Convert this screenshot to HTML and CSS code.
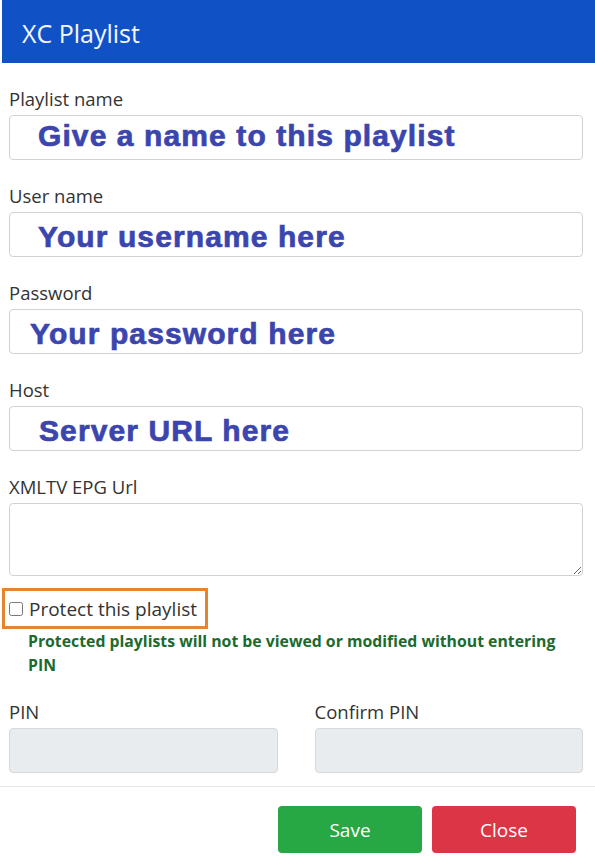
FILE: index.html
```html
<!DOCTYPE html>
<html>
<head>
<meta charset="utf-8">
<link rel="stylesheet" href="styles.css">
</head>
<body>
<div class="modal">
  <div class="modal-header">XC Playlist</div>
  <div class="modal-body">
    <div class="group">
      <label class="lbl">Playlist name</label>
      <div class="field"><span class="hint hint-a">Give a name to this playlist</span></div>
    </div>
    <div class="group">
      <label class="lbl">User name</label>
      <div class="field"><span class="hint hint-a low">Your username here</span></div>
    </div>
    <div class="group">
      <label class="lbl">Password</label>
      <div class="field"><span class="hint hint-b low">Your password here</span></div>
    </div>
    <div class="group">
      <label class="lbl">Host</label>
      <div class="field"><span class="hint hint-c low">Server URL here</span></div>
    </div>
    <div class="group last">
      <label class="lbl">XMLTV EPG Url</label>
      <textarea class="area"></textarea>
    </div>
    <label class="protect"><input type="checkbox" class="chk"><span>Protect this playlist</span></label>
    <p class="note">Protected playlists will not be viewed or modified without entering PIN</p>
    <div class="pins">
      <div class="pin-col">
        <label class="lbl">PIN</label>
        <div class="field disabled"></div>
      </div>
      <div class="pin-col">
        <label class="lbl">Confirm PIN</label>
        <div class="field disabled"></div>
      </div>
    </div>
  </div>
  <div class="modal-footer">
    <button class="btn btn-save">Save</button>
    <button class="btn btn-close">Close</button>
  </div>
</div>
</body>
</html>
```
FILE: styles.css
```css
html, body {
  margin: 0;
  padding: 0;
  background: #ffffff;
}
body {
  font-family: "Open Sans", "Noto Sans", sans-serif;
  color: #333;
}
.modal {
  width: 595px;
  height: 860px;
  padding-left: 2px;
  box-sizing: border-box;
  background: #fff;
}
.modal-header {
  height: 63px;
  background: #1052c6;
  color: #f4f7ff;
  font-size: 25px;
  line-height: 66px;
  padding-left: 20px;
}
.modal-body {
  padding: 24px 12px 0 7px;
}
.group {
  margin-bottom: 24px;
}
.group.last {
  margin-bottom: 12px;
}
.lbl {
  display: block;
  font-size: 18.5px;
  line-height: 24px;
  margin-bottom: 4px;
  color: #333;
}
.field {
  height: 45px;
  box-sizing: border-box;
  border: 1px solid #d2d2d2;
  border-radius: 4px;
  display: flex;
  align-items: center;
  background: #fff;
}
.field.disabled {
  background: #e9ecef;
  border-color: #d6d8db;
}
.hint {
  font-family: "Liberation Sans", Arial, sans-serif;
  font-weight: bold;
  font-size: 30px;
  letter-spacing: 1.1px;
  -webkit-text-stroke: 0.7px #3b45ae;
  color: #3b45ae;
  margin-top: -3px;
}
.hint.low {
  margin-top: 5px;
}
.hint-a { padding-left: 28px; }
.hint-b { padding-left: 20px; }
.hint-c { padding-left: 29px; }
.area {
  display: block;
  width: 100%;
  height: 73px;
  box-sizing: border-box;
  border: 1px solid #d2d2d2;
  border-radius: 4px;
  margin: 0;
  resize: vertical;
}
.protect {
  display: inline-flex;
  align-items: center;
  margin-left: -7px;
  height: 41px;
  width: 206px;
  box-sizing: border-box;
  border: 3px solid #e5852f;
  padding-left: 4px;
  font-size: 19px;
  color: #333;
}
.chk {
  width: 14px;
  height: 14px;
  margin: 0 6px 0 0;
}
.note {
  margin: 0 0 0 19px;
  padding-right: 10px;
  font-weight: bold;
  font-size: 15.8px;
  line-height: 24px;
  color: #1b6b2d;
}
.pins {
  display: flex;
  gap: 37px;
  margin-top: 23px;
}
.pin-col {
  flex: 1;
}
.modal-footer {
  margin-top: 13px;
  border-top: 1px solid #e6e6e6;
  margin-left: -2px;
  display: flex;
  justify-content: flex-end;
  gap: 10px;
  padding: 19px 19px 0 0;
}
.btn {
  width: 144px;
  height: 47px;
  border: none;
  border-radius: 4px;
  color: #fff;
  font-family: "Open Sans", "Noto Sans", sans-serif;
  font-size: 19px;
  cursor: pointer;
}
.btn-save { background: #28a745; }
.btn-close { background: #dc3545; }
```
